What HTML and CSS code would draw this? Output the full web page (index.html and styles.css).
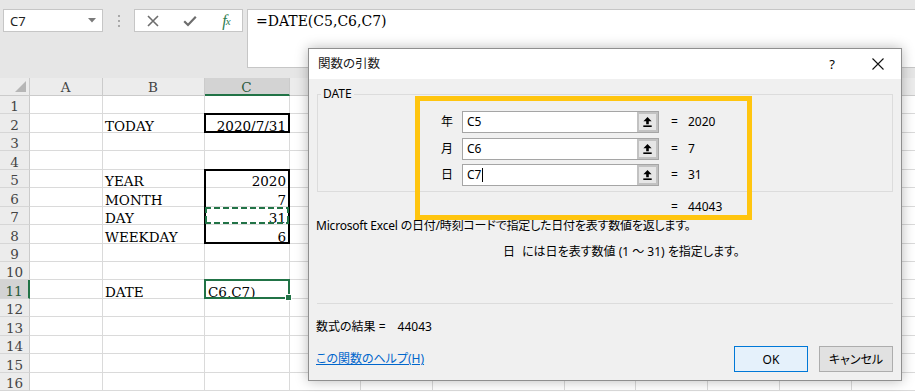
FILE: index.html
```html
<!DOCTYPE html>
<html lang="ja">
<head>
<meta charset="utf-8">
<title>DATE</title>
<link rel="stylesheet" href="styles.css">
</head>
<body>
<div class="app">
  <div class="fbar">
    <div class="namebox"><span>C7</span><svg width="8" height="5" viewBox="0 0 8 5"><path d="M0 0H8L4 4.5Z" fill="#7a7a7a"/></svg></div>
    <div class="grip"><i></i><i></i><i></i></div>
    <div class="fbtns">
      <span class="fb"><svg width="12" height="12" viewBox="0 0 12 12"><path d="M1 1L11 11M11 1L1 11" stroke="#6d6d6d" stroke-width="1.6" fill="none"/></svg></span>
      <span class="fb"><svg width="14" height="12" viewBox="0 0 14 12"><path d="M1.2 6.2L5 10L12.8 1.8" stroke="#6d6d6d" stroke-width="2.2" fill="none"/></svg></span>
      <span class="fb fx">f<small>x</small></span>
    </div>
    <div class="finput">=DATE(C5,C6,C7)</div>
  </div>

  <div class="sheet">
    <div class="ch corner"></div><div class="ch">A</div><div class="ch">B</div><div class="ch on">C</div><div class="ch"></div><div class="ch"></div><div class="ch"></div><div class="ch"></div><div class="ch"></div><div class="ch"></div><div class="ch"></div><div class="ch"></div>

    <div class="rh">1</div><div></div><div></div><div></div><div></div><div></div><div></div><div></div><div></div><div></div><div></div><div></div>
    <div class="rh">2</div><div></div><div>TODAY</div><div class="n box">2020/7/31</div><div></div><div></div><div></div><div></div><div></div><div></div><div></div><div></div>
    <div class="rh">3</div><div></div><div></div><div></div><div></div><div></div><div></div><div></div><div></div><div></div><div></div><div></div>
    <div class="rh">4</div><div></div><div></div><div></div><div></div><div></div><div></div><div></div><div></div><div></div><div></div><div></div>
    <div class="rh">5</div><div></div><div>YEAR</div><div class="n range">2020</div><div></div><div></div><div></div><div></div><div></div><div></div><div></div><div></div>
    <div class="rh">6</div><div></div><div>MONTH</div><div class="n">7</div><div></div><div></div><div></div><div></div><div></div><div></div><div></div><div></div>
    <div class="rh">7</div><div></div><div>DAY</div><div class="n ants">31</div><div></div><div></div><div></div><div></div><div></div><div></div><div></div><div></div>
    <div class="rh">8</div><div></div><div>WEEKDAY</div><div class="n">6</div><div></div><div></div><div></div><div></div><div></div><div></div><div></div><div></div>
    <div class="rh">9</div><div></div><div></div><div></div><div></div><div></div><div></div><div></div><div></div><div></div><div></div><div></div>
    <div class="rh">10</div><div></div><div></div><div></div><div></div><div></div><div></div><div></div><div></div><div></div><div></div><div></div>
    <div class="rh on">11</div><div></div><div>DATE</div><div class="sel">C6,C7)</div><div></div><div></div><div></div><div></div><div></div><div></div><div></div><div></div>
    <div class="rh">12</div><div></div><div></div><div></div><div></div><div></div><div></div><div></div><div></div><div></div><div></div><div></div>
    <div class="rh">13</div><div></div><div></div><div></div><div></div><div></div><div></div><div></div><div></div><div></div><div></div><div></div>
    <div class="rh">14</div><div></div><div></div><div></div><div></div><div></div><div></div><div></div><div></div><div></div><div></div><div></div>
    <div class="rh">15</div><div></div><div></div><div></div><div></div><div></div><div></div><div></div><div></div><div></div><div></div><div></div>
    <div class="rh">16</div><div></div><div></div><div></div><div></div><div></div><div></div><div></div><div></div><div></div><div></div><div></div>
  </div>

  <div class="dialog">
    <div class="dtitle">
      <span class="dt">関数の引数</span>
      <span class="tbtn">?</span>
      <span class="tbtn"><svg width="12" height="12" viewBox="0 0 12 12"><path d="M0.5 0.5L11.5 11.5M11.5 0.5L0.5 11.5" stroke="#111" stroke-width="1.1" fill="none"/></svg></span>
    </div>
    <div class="dbody">
      <fieldset class="grp">
        <legend>DATE</legend>
        <div class="args">
          <span class="lab">年</span>
          <div class="inp"><span class="iv">C5</span><span class="refbtn"><svg width="9" height="10" viewBox="0 0 9 10"><path d="M4.5 0L8.6 4.2H5.8V7.2H3.2V4.2H0.4Z" fill="#000"/><rect x="0.3" y="8.4" width="8.4" height="1.6" fill="#000"/></svg></span></div>
          <span class="eq">=</span><span class="val">2020</span>

          <span class="lab">月</span>
          <div class="inp"><span class="iv">C6</span><span class="refbtn"><svg width="9" height="10" viewBox="0 0 9 10"><path d="M4.5 0L8.6 4.2H5.8V7.2H3.2V4.2H0.4Z" fill="#000"/><rect x="0.3" y="8.4" width="8.4" height="1.6" fill="#000"/></svg></span></div>
          <span class="eq">=</span><span class="val">7</span>

          <span class="lab">日</span>
          <div class="inp"><span class="iv">C7<i class="caret"></i></span><span class="refbtn"><svg width="9" height="10" viewBox="0 0 9 10"><path d="M4.5 0L8.6 4.2H5.8V7.2H3.2V4.2H0.4Z" fill="#000"/><rect x="0.3" y="8.4" width="8.4" height="1.6" fill="#000"/></svg></span></div>
          <span class="eq">=</span><span class="val">31</span>
        </div>
      </fieldset>
      <div class="args res"><span></span><span></span><span class="eq">=</span><span class="val">44043</span></div>
      <p class="desc">Microsoft Excel の日付/時刻コードで指定した日付を表す数値を返します。</p>
      <p class="argdesc"><span class="an">日</span><span>には日を表す数値 (1 ～ 31) を指定します。</span></p>
      <div class="sep"></div>
      <p class="fres">数式の結果 =<span class="rv">44043</span></p>
      <div class="foot">
        <a class="help" href="#">この関数のヘルプ(H)</a>
        <div class="btns">
          <button class="btn ok" type="button">OK</button>
          <button class="btn" type="button">キャンセル</button>
        </div>
      </div>
    </div>
    <div class="hilite"></div>
  </div>
</div>
</body>
</html>
```
FILE: styles.css
```css
html, body {
  margin: 0;
  padding: 0;
}

.app {
  position: relative;
  width: 915px;
  height: 392px;
  overflow: hidden;
  background: #fff;
}

/* ---------- formula bar ---------- */
.fbar {
  display: flex;
  align-items: flex-start;
  height: 78px;
  box-sizing: border-box;
  padding: 9px 0 0 3px;
  background: #e6e6e6;
}

.namebox {
  width: 100px;
  height: 23px;
  box-sizing: border-box;
  background: #fff;
  border: 1px solid #c6c6c6;
  display: flex;
  align-items: center;
  justify-content: space-between;
  padding: 0 6px;
  font: 13px "Noto Sans", sans-serif;
  color: #222;
}

.grip {
  width: 31px;
  height: 23px;
  display: flex;
  flex-direction: column;
  align-items: center;
  justify-content: center;
  gap: 3px;
}

.grip i {
  display: block;
  width: 2px;
  height: 2px;
  background: #a8a8a8;
}

.fbtns {
  width: 109px;
  height: 23px;
  box-sizing: border-box;
  background: #fff;
  border: 1px solid #c6c6c6;
  display: grid;
  grid-template-columns: 36px 37px 34px;
  align-items: center;
}

.fb {
  display: flex;
  justify-content: center;
  align-items: center;
}

.fx {
  font: italic 16px/16px "Liberation Serif", serif;
  color: #2e7d4f;
  padding-left: 3px;
}

.fx small {
  font-size: 11px;
  margin-left: -1px;
}

.finput {
  flex: 1;
  margin-left: 4px;
  height: 59px;
  box-sizing: border-box;
  background: #fff;
  border: 1px solid #c6c6c6;
  border-right: none;
  padding: 1px 0 0 8px;
  font: 14px/20px "DejaVu Serif", serif;
  color: #000;
}

/* ---------- sheet ---------- */
.sheet {
  display: grid;
  grid-template-columns: 30px 73px 102px 85px 71px 72px 132px 71px 72px 72px 72px 72px;
  grid-template-rows: 18px;
  grid-auto-rows: 18.44px;
}

.sheet > div {
  position: relative;
  box-sizing: border-box;
  border-right: 1px solid #dadada;
  border-bottom: 1px solid #dadada;
  display: flex;
  align-items: flex-end;
  padding: 0 3px 0 2px;
  font: 13.5px/12px "DejaVu Serif", serif;
  color: #000;
  white-space: nowrap;
}

.sheet > .ch {
  background: #ececec;
  border-right-color: #cbcbcb;
  border-bottom-color: #cbcbcb;
  justify-content: center;
  color: #444;
  padding-bottom: 2px;
}

.sheet > .ch.on {
  background: #d3d3d3;
  border-bottom: 2px solid #217346;
  color: #2b5a3d;
  padding-bottom: 1px;
}

.sheet > .corner::after {
  content: "";
  position: absolute;
  right: 3px;
  bottom: 3px;
  border-style: solid;
  border-width: 0 0 11px 11px;
  border-color: transparent transparent #b6b6b6 transparent;
}

.sheet > .rh {
  background: #ececec;
  border-right-color: #cbcbcb;
  border-bottom-color: #d6d6d6;
  justify-content: center;
  color: #444;
  padding: 0 0 1px;
}

.sheet > .rh.on {
  background: #d3d3d3;
  border-right: 2px solid #217346;
  color: #2b5a3d;
}

.sheet > .n {
  justify-content: flex-end;
}

.sheet > .box::after {
  content: "";
  position: absolute;
  left: -1px;
  top: -1px;
  right: -1px;
  bottom: -1px;
  border: 2px solid #000;
  z-index: 2;
}

.sheet > .range::after {
  content: "";
  position: absolute;
  left: -1px;
  top: -1px;
  right: -1px;
  height: calc(4 * 18.44px + 1px);
  border: 2px solid #000;
  box-sizing: border-box;
  z-index: 2;
}

.sheet > .ants::after {
  content: "";
  position: absolute;
  left: 0;
  top: 0;
  right: 0;
  bottom: 0;
  z-index: 3;
  background:
    repeating-linear-gradient(90deg, #217346 0 6px, transparent 6px 9px) left top / 100% 2px no-repeat,
    repeating-linear-gradient(90deg, #217346 0 6px, transparent 6px 9px) left bottom / 100% 2px no-repeat,
    repeating-linear-gradient(180deg, #217346 0 6px, transparent 6px 9px) left top / 2px 100% no-repeat,
    repeating-linear-gradient(180deg, #217346 0 6px, transparent 6px 9px) right top / 2px 100% no-repeat;
}

.sheet > .sel {
  padding-left: 3px;
}

.sheet > .sel::after {
  content: "";
  position: absolute;
  left: -1px;
  top: -1px;
  right: -1px;
  bottom: -1px;
  border: 2px solid #217346;
  z-index: 2;
}

.sheet > .sel::before {
  content: "";
  position: absolute;
  right: -3px;
  bottom: -3px;
  width: 5px;
  height: 5px;
  background: #217346;
  border: 1px solid #fff;
  z-index: 3;
}

/* ---------- dialog ---------- */
.dialog {
  position: absolute;
  left: 308px;
  top: 48px;
  width: 594px;
  height: 333px;
  box-sizing: border-box;
  border: 1px solid #8f8f8f;
  background: #f0f0f0;
  box-shadow: 0 0 12px rgba(0, 0, 0, 0.28);
  font: 12px/16px "Noto Sans", "Noto Sans CJK JP", sans-serif;
  font-feature-settings: "palt";
  color: #000;
  display: flex;
  flex-direction: column;
}

.dtitle {
  height: 30px;
  background: #fff;
  display: flex;
  align-items: center;
  flex: none;
}

.dt {
  flex: 1;
  padding-left: 9px;
  font-size: 12.5px;
  color: #1a1a1a;
}

.tbtn {
  width: 46px;
  height: 30px;
  display: flex;
  align-items: center;
  justify-content: center;
  font-size: 13px;
}

.dbody {
  flex: 1;
  display: flex;
  flex-direction: column;
  padding: 0 8px 8px 7px;
}

.grp {
  margin: 7px 0 0 1px;
  padding: 9px 0 5px;
  border: 1px solid #dcdcdc;
  min-width: 0;
}

.grp legend {
  margin-left: 3px;
  padding: 0 2px;
  line-height: 16px;
}

.args {
  display: grid;
  grid-template-columns: 144px 208px 18px 1fr;
  grid-auto-rows: 22px;
  row-gap: 4.5px;
  align-items: center;
}

.lab {
  text-align: right;
  padding-right: 9px;
}

.inp {
  width: 197px;
  height: 22px;
  box-sizing: border-box;
  border: 1px solid #a5a5a5;
  background: #fff;
  display: flex;
  align-items: stretch;
}

.iv {
  flex: 1;
  display: flex;
  align-items: center;
  padding-left: 4px;
}

.caret {
  display: inline-block;
  width: 1px;
  height: 14px;
  background: #000;
  margin-left: 1px;
}

.refbtn {
  width: 21px;
  background: #e6e6e6;
  box-shadow: inset 0 0 0 2px #c2c2c2;
  display: flex;
  align-items: center;
  justify-content: center;
}

.eq {
  padding-left: 1px;
}

.res {
  margin: 7px 0 0 2px;
  grid-auto-rows: 16px;
}

.desc {
  margin: 3px 0 0;
  letter-spacing: -0.2px;
}

.argdesc {
  margin: 10px 0 0;
  padding-left: 187px;
  display: flex;
  gap: 7px;
}

.sep {
  height: 1px;
  background: #dcdcdc;
  margin: 43px 0 0 1px;
}

.fres {
  margin: 15px 0 0;
}

.rv {
  margin-left: 12px;
}

.foot {
  margin-top: 11px;
  display: flex;
  align-items: center;
  justify-content: space-between;
}

.help {
  color: #0066cc;
  text-decoration: underline;
}

.btns {
  display: flex;
  gap: 11px;
}

.btn {
  width: 74px;
  height: 26px;
  box-sizing: border-box;
  border: 1px solid #adadad;
  background: #e1e1e1;
  font: 12px "Noto Sans", "Noto Sans CJK JP", sans-serif;
  font-feature-settings: "palt";
  color: #000;
  padding: 0;
}

.btn.ok {
  border-color: #0078d7;
  background: #e5f1fb;
}

.hilite {
  position: absolute;
  left: 106px;
  top: 47px;
  width: 337px;
  height: 124px;
  box-sizing: border-box;
  border: 5px solid #ffc50f;
  pointer-events: none;
}
```
